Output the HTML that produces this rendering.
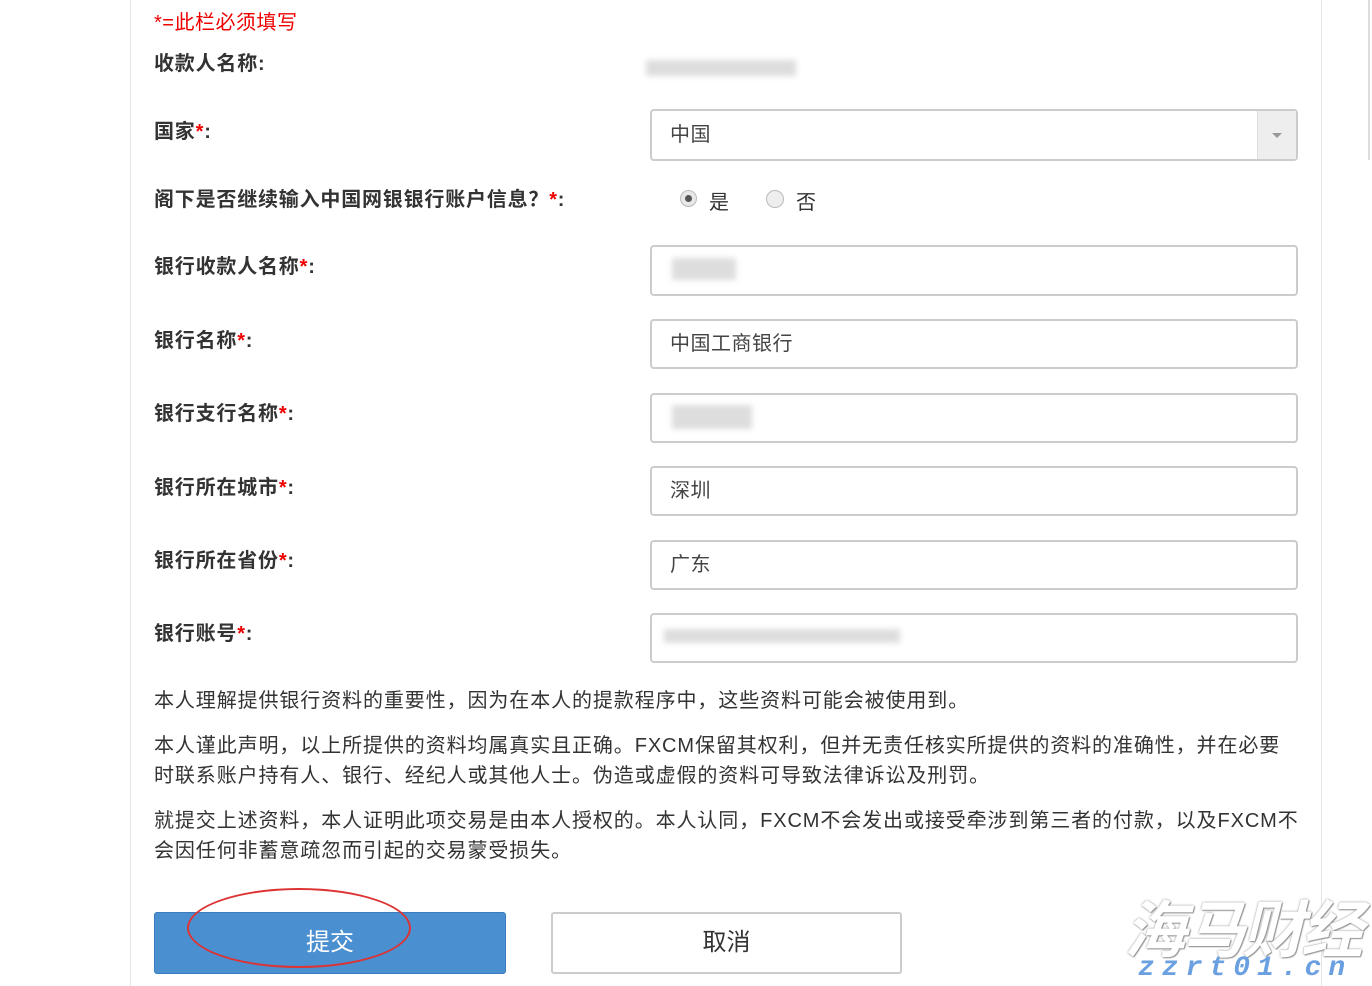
<!DOCTYPE html><html><head><meta charset="utf-8"><style>
body{margin:0;width:1372px;height:986px;background:#fff;position:relative;overflow:hidden;font-family:"Liberation Sans","Noto Sans CJK SC",sans-serif;color:#333}
.a{position:absolute}
.l{position:absolute;left:154px;font-size:20px;font-weight:bold;color:#333;line-height:24px;letter-spacing:0.8px}
.r{color:#e00}
.in{position:absolute;left:650px;width:648px;border:2px solid #ccc;border-radius:4px;background:#fff;font-size:20px;color:#444;box-sizing:border-box;padding-left:18px;letter-spacing:0.5px}
.p{position:absolute;left:154px;width:1200px;font-size:20px;line-height:30px;color:#333;letter-spacing:0.9px;white-space:nowrap}
.blur{position:absolute;background:#ddd;filter:blur(3px)}
</style></head><body>
<div class="a" style="left:130px;top:0;width:1px;height:986px;background:#e5e5e5"></div>
<div class="a" style="left:1321px;top:0;width:1px;height:986px;background:#e5e5e5"></div>
<div class="a" style="left:1368px;top:0;width:2px;height:160px;background:#ddd"></div>
<div class="a" style="left:154px;top:6px;font-size:20px;color:#e00;letter-spacing:0.5px">*=此栏必须填写</div>
<div class="l" style="top:52px">收款人名称:</div>
<div class="blur" style="left:646px;top:60px;width:150px;height:16px"></div>
<div class="l" style="top:120px">国家<span class="r">*</span>:</div>
<div class="in" style="top:109px;height:52px;line-height:48px">中国<div class="a" style="right:0;top:0;width:38px;height:48px;background:#eee;border-left:1px solid #ddd"><div class="a" style="left:14px;top:22px;border:5px solid transparent;border-top:5px solid #999;border-bottom:0"></div></div></div>
<div class="l" style="top:188px">阁下是否继续输入中国网银银行账户信息？<span class="r">*</span>:</div>
<div class="a" style="left:680px;top:190px;width:17px;height:17px;border-radius:50%;background:#e8e8e8;border:1px solid #bbb;box-sizing:border-box"><div class="a" style="left:4px;top:4px;width:7px;height:7px;border-radius:50%;background:#555"></div></div>
<div class="a" style="left:709px;top:186px;font-size:20px">是</div>
<div class="a" style="left:766px;top:190px;width:18px;height:18px;border-radius:50%;background:#eee;border:1px solid #bbb;box-sizing:border-box"></div>
<div class="a" style="left:796px;top:186px;font-size:20px">否</div>
<div class="l" style="top:255px">银行收款人名称<span class="r">*</span>:</div>
<div class="in" style="top:245px;height:51px"></div><div class="blur" style="left:672px;top:258px;width:64px;height:22px"></div>
<div class="l" style="top:329px">银行名称<span class="r">*</span>:</div>
<div class="in" style="top:319px;height:50px;line-height:46px">中国工商银行</div>
<div class="l" style="top:402px">银行支行名称<span class="r">*</span>:</div>
<div class="in" style="top:393px;height:50px"></div><div class="blur" style="left:672px;top:405px;width:80px;height:24px"></div>
<div class="l" style="top:476px">银行所在城市<span class="r">*</span>:</div>
<div class="in" style="top:466px;height:50px;line-height:46px">深圳</div>
<div class="l" style="top:549px">银行所在省份<span class="r">*</span>:</div>
<div class="in" style="top:540px;height:50px;line-height:46px">广东</div>
<div class="l" style="top:622px">银行账号<span class="r">*</span>:</div>
<div class="in" style="top:613px;height:50px"></div><div class="blur" style="left:664px;top:629px;width:236px;height:14px"></div>
<div class="p" style="top:686px">本人理解提供银行资料的重要性，因为在本人的提款程序中，这些资料可能会被使用到。</div>
<div class="p" style="top:731px">本人谨此声明，以上所提供的资料均属真实且正确。FXCM保留其权利，但并无责任核实所提供的资料的准确性，并在必要<br>时联系账户持有人、银行、经纪人或其他人士。伪造或虚假的资料可导致法律诉讼及刑罚。</div>
<div class="p" style="top:806px">就提交上述资料，本人证明此项交易是由本人授权的。本人认同，FXCM不会发出或接受牵涉到第三者的付款，以及FXCM不<br>会因任何非蓄意疏忽而引起的交易蒙受损失。</div>
<div class="a" style="left:154px;top:912px;width:352px;height:62px;background:#4a8fd0;border:1px solid #3a7cc0;border-radius:3px;box-sizing:border-box;color:#fff;font-size:24px;text-align:center;line-height:60px">提交</div>
<div class="a" style="left:187px;top:888px;width:224px;height:80px;border:2px solid #d33;border-radius:50%;box-sizing:border-box"></div>
<div class="a" style="left:551px;top:912px;width:351px;height:62px;background:#fff;border:2px solid #ccc;border-radius:3px;box-sizing:border-box;color:#333;font-size:24px;text-align:center;line-height:58px">取消</div>
<div class="a" style="left:1124px;top:880px;font-size:62px;font-style:italic;font-weight:bold;color:#fff;text-shadow:0 0 2px #888,1px 1px 1px #999;letter-spacing:-3px">海马财经</div>
<div class="a" style="left:1138px;top:953px;font-size:28px;font-style:italic;font-weight:bold;color:#6aa0e0;letter-spacing:7px;font-family:'Liberation Mono',monospace">zzrt01.cn</div>
</body></html>
